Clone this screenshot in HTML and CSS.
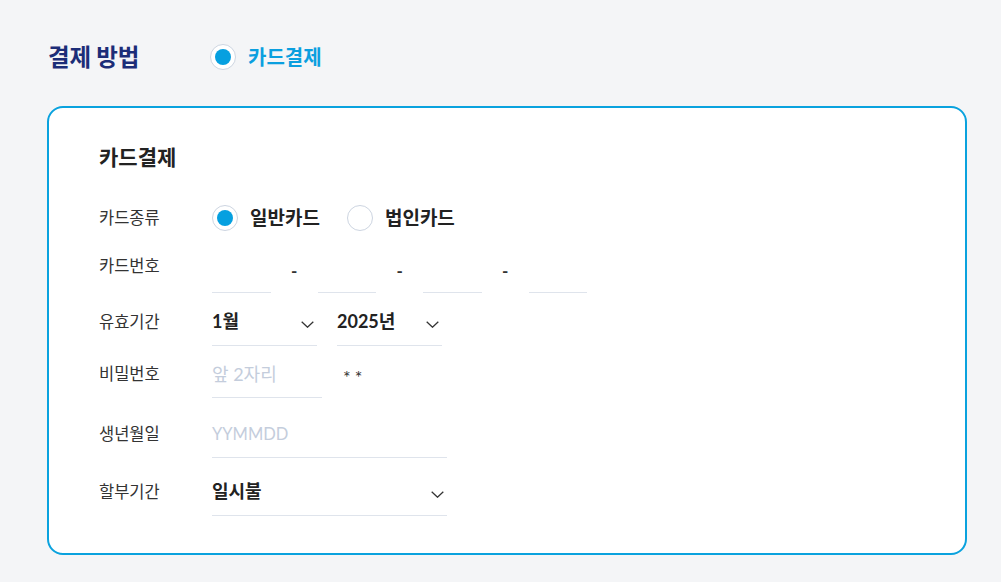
FILE: index.html
```html
<!DOCTYPE html>
<html lang="ko">
<head>
<meta charset="utf-8">
<title>결제 방법</title>
<link rel="stylesheet" href="styles.css">
</head>
<body>
<div class="page">
  <div class="method">
    <h2 class="method-title">결제 방법</h2>
    <label class="radio-opt">
      <span class="radio checked"></span>
      <span class="method-name">카드결제</span>
    </label>
  </div>

  <section class="card">
    <h3 class="card-title">카드결제</h3>

    <div class="row row-type">
      <div class="label">카드종류</div>
      <div class="ctrl radios">
        <label class="radio-opt">
          <span class="radio checked"></span>
          <span class="opt-text">일반카드</span>
        </label>
        <label class="radio-opt">
          <span class="radio"></span>
          <span class="opt-text">법인카드</span>
        </label>
      </div>
    </div>

    <div class="row row-num">
      <div class="label label-up">카드번호</div>
      <div class="ctrl">
        <span class="field num"></span>
        <span class="sep">-</span>
        <span class="field num"></span>
        <span class="sep">-</span>
        <span class="field num"></span>
        <span class="sep">-</span>
        <span class="field num"></span>
      </div>
    </div>

    <div class="row row-exp">
      <div class="label">유효기간</div>
      <div class="ctrl gap20">
        <div class="field select sel-sm"><span class="value">1월</span><svg class="chev" width="13" height="7" viewBox="0 0 13 7"><polyline points="0.7,0.7 6.5,6.2 12.3,0.7" fill="none" stroke="#333" stroke-width="1.3"/></svg></div>
        <div class="field select sel-sm"><span class="value">2025년</span><svg class="chev" width="13" height="7" viewBox="0 0 13 7"><polyline points="0.7,0.7 6.5,6.2 12.3,0.7" fill="none" stroke="#333" stroke-width="1.3"/></svg></div>
      </div>
    </div>

    <div class="row row-pw">
      <div class="label">비밀번호</div>
      <div class="ctrl gap21">
        <div class="field pw"><span class="ph ph-ko">앞 2자리</span></div>
        <span class="mask">**</span>
      </div>
    </div>

    <div class="row row-birth">
      <div class="label">생년월일</div>
      <div class="ctrl">
        <div class="field wide"><span class="ph ph-en">YYMMDD</span></div>
      </div>
    </div>

    <div class="row row-inst">
      <div class="label">할부기간</div>
      <div class="ctrl">
        <div class="field select wide"><span class="value">일시불</span><svg class="chev" width="13" height="7" viewBox="0 0 13 7"><polyline points="0.7,0.7 6.5,6.2 12.3,0.7" fill="none" stroke="#333" stroke-width="1.3"/></svg></div>
      </div>
    </div>
  </section>
</div>
</body>
</html>
```

FILE: styles.css
```css
* { box-sizing: border-box; }
html, body { margin: 0; padding: 0; }
body {
  background: #f4f5f7;
  font-family: Lato, "Noto Sans CJK KR", "Noto Sans", sans-serif;
  color: #333;
}
.page {
  padding: 44px 0 0 47px;
  width: 967px;
}
.method {
  display: flex;
  align-items: center;
  height: 26px;
}
.method-title {
  margin: 0;
  width: 163px;
  padding-left: 1px;
  font-size: 23.5px;
  font-weight: 700;
  line-height: 26px;
  color: #1c2d78;
  letter-spacing: -0.2px;
}
.radio-opt {
  display: flex;
  align-items: center;
  gap: 12px;
}
.radio {
  width: 26px;
  height: 26px;
  border-radius: 50%;
  border: 1px solid #cdd5e1;
  background: #fff;
  display: flex;
  align-items: center;
  justify-content: center;
  flex: none;
}
.radio.checked::after {
  content: "";
  width: 16px;
  height: 16px;
  border-radius: 50%;
  background: #06a0e0;
}
.method-name {
  font-size: 20px;
  font-weight: 700;
  color: #0a9fdf;
  line-height: 26px;
}
.card {
  margin-top: 36px;
  background: #fff;
  border: 2px solid #0aa2de;
  border-radius: 16px;
  height: 449px;
  padding: 35px 50px 0 50px;
}
.card-title {
  margin: 0;
  font-size: 21px;
  font-weight: 700;
  color: #222;
  line-height: 28px;
}
.row {
  display: flex;
  align-items: center;
}
.label {
  width: 113px;
  flex: none;
  font-size: 16.5px;
  line-height: 22px;
  color: #333;
}
.ctrl {
  display: flex;
  align-items: center;
}
.row-type { margin-top: 33px; height: 28px; }
.radios { gap: 27px; }
.opt-text {
  font-size: 19px;
  font-weight: 700;
  color: #222;
  line-height: 26px;
}
.row-num { margin-top: 13px; }
.row-exp { margin-top: 5px; }
.row-pw { margin-top: 4px; }
.row-birth { margin-top: 12px; }
.row-inst { margin-top: 10px; }
.label-up { position: relative; top: -3px; }
.field {
  height: 48px;
  border-bottom: 1px solid #dfe4ec;
  display: flex;
  align-items: center;
  flex: none;
}
.field.num { width: 58.6px; }
.sep {
  width: 47px;
  text-align: center;
  font-size: 17px;
  font-weight: 700;
  color: #333;
  position: relative;
  top: 1px;
}
.gap20 { gap: 20px; }
.gap21 { gap: 21px; }
.select {
  justify-content: space-between;
  padding-right: 3px;
}
.sel-sm { width: 105px; }
.wide { width: 235px; }
.pw { width: 110px; }
.value {
  font-size: 18px;
  font-weight: 700;
  color: #222;
  line-height: 24px;
  position: relative;
  top: -1px;
}
.chev { position: relative; top: 3px; }
.ph {
  color: #c4cddc;
  line-height: 24px;
}
.ph-ko { font-size: 18px; }
.ph-en { font-size: 16.5px; }
.mask {
  font-size: 18px;
  color: #333;
  letter-spacing: 4px;
  line-height: 20px;
  position: relative;
  top: 3px;
}
```
